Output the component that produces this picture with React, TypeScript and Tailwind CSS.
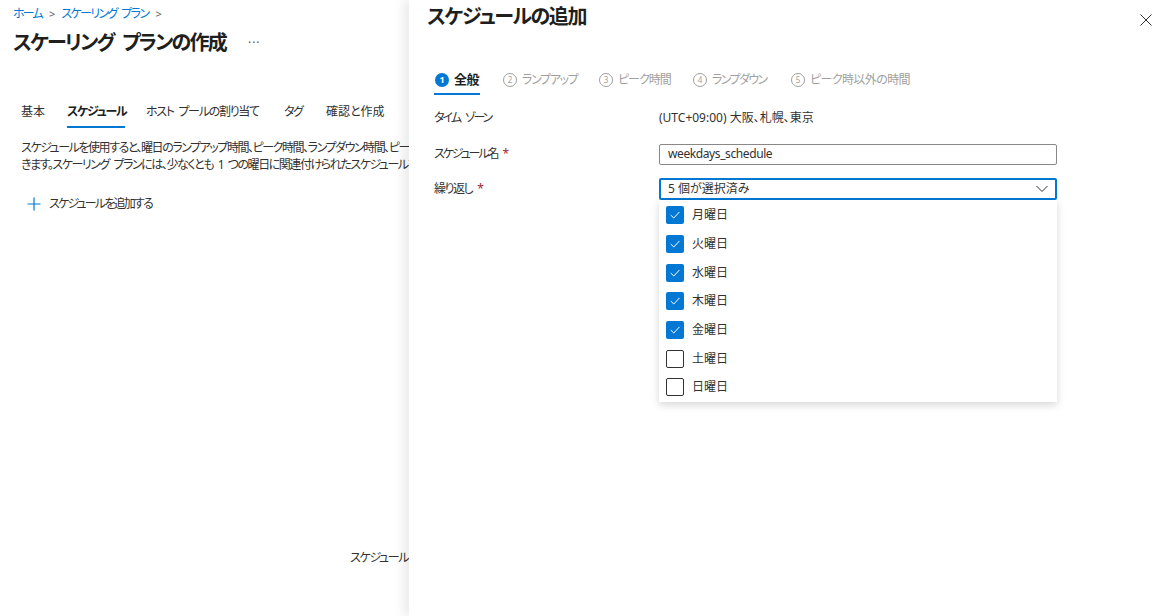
import React from "react";

const font = {
  fontFamily: "'Noto Sans', 'Noto Sans CJK JP', sans-serif",
  fontFeatureSettings: "'palt'",
};

function Check() {
  return (
    <svg width="12" height="12" viewBox="0 0 12 12" fill="none">
      <path d="M2 6.3 L4.8 9 L10.2 3.2" stroke="white" strokeWidth="1" strokeLinecap="round" strokeLinejoin="round" />
    </svg>
  );
}

const days: [string, boolean][] = [
  ["月曜日", true],
  ["火曜日", true],
  ["水曜日", true],
  ["木曜日", true],
  ["金曜日", true],
  ["土曜日", false],
  ["日曜日", false],
];

export default function App() {
  return (
    <div className="relative w-[1170px] h-[616px] overflow-hidden bg-white text-[#323130]" style={font}>
      {/* Background page (visible part, left of the panel) */}
      <div className="flex flex-col h-full w-[409px] overflow-hidden">
        <div className="flex items-center pl-[13px] pt-[5px] text-[12px] leading-[18px] text-[#0078d4]">
          <span className="tracking-[-1.8px]">ホーム</span>
          <span className="ml-[7px] text-[#605e5c] text-[11px]">&gt;</span>
          <span className="ml-[6px] tracking-[-1.6px]">スケーリング{"\u2002"}プラン</span>
          <span className="ml-[7px] text-[#605e5c] text-[11px]">&gt;</span>
        </div>
        <div className="flex items-center pl-[13px] mt-[7px] h-[26px]">
          <span className="text-[20px] font-bold leading-[26px] tracking-[-1.8px] text-[#201f1e]">スケーリング{"\u2002"}プランの作成</span>
          <span className="ml-[22px] text-[12px] text-[#605e5c] tracking-[1px]">···</span>
        </div>
        <div className="flex items-start pl-[21px] mt-[44px] text-[12px] leading-[18px]">
          <div className="w-[46px] h-[29px] pt-[3px]">基本</div>
          <div className="w-[79px] h-[29px] pt-[3px] flex flex-col">
            <span className="w-[58px] font-bold tracking-[-1.3px] text-[#201f1e] whitespace-nowrap">スケジュール</span>
            <div className="w-[58px] h-[2px] bg-[#0078d4] mt-[5px]" />
          </div>
          <div className="w-[138px] h-[29px] pt-[3px] tracking-[-1.3px] whitespace-nowrap">ホスト{"\u2002"}プールの割り当て</div>
          <div className="w-[42px] h-[29px] pt-[3px] tracking-[-1.5px]">タグ</div>
          <div className="h-[29px] pt-[3px] whitespace-nowrap">確認と作成</div>
        </div>
        <div className="pl-[21px] mt-[10px] text-[12px] leading-[17px] whitespace-nowrap tracking-[-1.45px] overflow-hidden">
          <div>スケジュールを使用すると、曜日のランプアップ時間、ピーク時間、ランプダウン時間、ピーク時以外の時間を作成し、自動スケーリングのトリガーを指定で</div>
          <div>きます。スケーリング{"\u2002"}プランには、少なくとも{"\u2002"}1{"\u2002"}つの曜日に関連付けられたスケジュールを含める必要があります。</div>
        </div>
        <div className="flex items-center pl-[27px] mt-[22px] gap-[8px] text-[12px]">
          <svg width="14" height="14" viewBox="0 0 14 14">
            <path d="M7 0.5 V13.5 M0.5 7 H13.5" stroke="#0078d4" strokeWidth="1.2" />
          </svg>
          <span className="tracking-[-1.8px]">スケジュールを追加する</span>
        </div>
        <div className="pl-[350px] mt-[336px] text-[12px] whitespace-nowrap tracking-[-1.3px] overflow-hidden">スケジュールを追加すると、ここに表示されます</div>
      </div>

      {/* Side panel */}
      <div className="absolute top-0 bottom-0 left-[409px] right-0 bg-white shadow-[-6px_0_10px_rgba(0,0,0,0.08)] flex flex-col">
        <div className="flex items-start justify-between pl-[18px] pr-[18px] pt-[3px]">
          <span className="text-[20px] font-bold leading-[28px] tracking-[-1.4px] text-[#201f1e]">スケジュールの追加</span>
          <svg className="mt-[11px]" width="12" height="12" viewBox="0 0 12 12">
            <path d="M0.5 0.5 L11.5 11.5 M11.5 0.5 L0.5 11.5" stroke="#323130" strokeWidth="1" />
          </svg>
        </div>

        <div className="flex items-start pl-[25px] mt-[37px] gap-[23px] text-[12px] whitespace-nowrap">
          <div className="flex flex-col w-[46px]">
            <div className="flex items-center gap-[5px] h-[24px] pl-[1px]">
              <span className="w-[14px] h-[14px] rounded-full bg-[#0078d4] text-white text-[9px] font-bold flex items-center justify-center">1</span>
              <span className="font-bold text-[13px] tracking-[-0.5px] text-[#201f1e]">全般</span>
            </div>
            <div className="h-[2px] bg-[#0078d4] mt-[1px]" />
          </div>
          <div className="w-[73px] flex items-center gap-[5px] h-[24px] text-[#a19f9d]">
            <span className="w-[14px] h-[14px] shrink-0 rounded-full border border-[#a19f9d] text-[8px] flex items-center justify-center">2</span>
            <span className="tracking-[-1.3px]">ランプアップ</span>
          </div>
          <div className="w-[71px] flex items-center gap-[5px] h-[24px] text-[#a19f9d]">
            <span className="w-[14px] h-[14px] shrink-0 rounded-full border border-[#a19f9d] text-[8px] flex items-center justify-center">3</span>
            <span className="tracking-[-1px]">ピーク時間</span>
          </div>
          <div className="w-[75px] flex items-center gap-[5px] h-[24px] text-[#a19f9d]">
            <span className="w-[14px] h-[14px] shrink-0 rounded-full border border-[#a19f9d] text-[8px] flex items-center justify-center">4</span>
            <span className="tracking-[-1.6px]">ランプダウン</span>
          </div>
          <div className="w-[119px] flex items-center gap-[5px] h-[24px] text-[#a19f9d]">
            <span className="w-[14px] h-[14px] shrink-0 rounded-full border border-[#a19f9d] text-[8px] flex items-center justify-center">5</span>
            <span className="tracking-[-0.6px]">ピーク時以外の時間</span>
          </div>
        </div>

        <div className="flex flex-col pl-[25px] mt-[11px] text-[12px]">
          <div className="flex items-center h-[24px]">
            <span className="w-[225px] flex items-center">
              <span className="tracking-[-2px]">タイム</span>
              <span className="ml-[5px] tracking-[-2.4px]">ゾーン</span>
            </span>
            <span>(UTC+09:00) 大阪、札幌、東京</span>
          </div>
          <div className="flex items-center h-[24px] mt-[12px]">
            <span className="w-[225px] flex items-center">
              <span className="tracking-[-2.1px]">スケジュール名</span>
              <span className="ml-[5px] text-[#a4262c]">*</span>
            </span>
            <div className="w-[398px] h-[21px] border border-[#8a8886] rounded-[2px] flex items-center pl-[8px] text-[12px] tracking-[-0.4px]">weekdays_schedule</div>
          </div>
          <div className="flex items-start mt-[12px]">
            <span className="w-[225px] h-[22px] flex items-center">
              <span className="tracking-[-1.5px]">繰り返し</span>
              <span className="ml-[5px] text-[#a4262c]">*</span>
            </span>
            <div className="flex flex-col w-[398px]">
              <div className="h-[22px] border-2 border-[#0078d4] rounded-[2px] flex items-center justify-between pl-[7px] pr-[7px]">
                <span>5 個が選択済み</span>
                <svg width="12" height="8" viewBox="0 0 12 8">
                  <path d="M0.5 1 L6 6.5 L11.5 1" stroke="#323130" strokeWidth="1" fill="none" />
                </svg>
              </div>
              <div className="h-[202px] pt-[1px] bg-white shadow-[0_3px_8px_rgba(0,0,0,0.16)] flex flex-col">
                {days.map(([d, c]) => (
                  <div key={d} className="h-[28.7px] flex items-center pl-[7px] gap-[8px] shrink-0">
                    {c ? (
                      <span className="w-[18px] h-[18px] rounded-[2px] bg-[#0078d4] flex items-center justify-center">
                        <Check />
                      </span>
                    ) : (
                      <span className="w-[18px] h-[18px] rounded-[2px] border border-[#323130]" />
                    )}
                    <span>{d}</span>
                  </div>
                ))}
              </div>
            </div>
          </div>
        </div>
      </div>
    </div>
  );
}
